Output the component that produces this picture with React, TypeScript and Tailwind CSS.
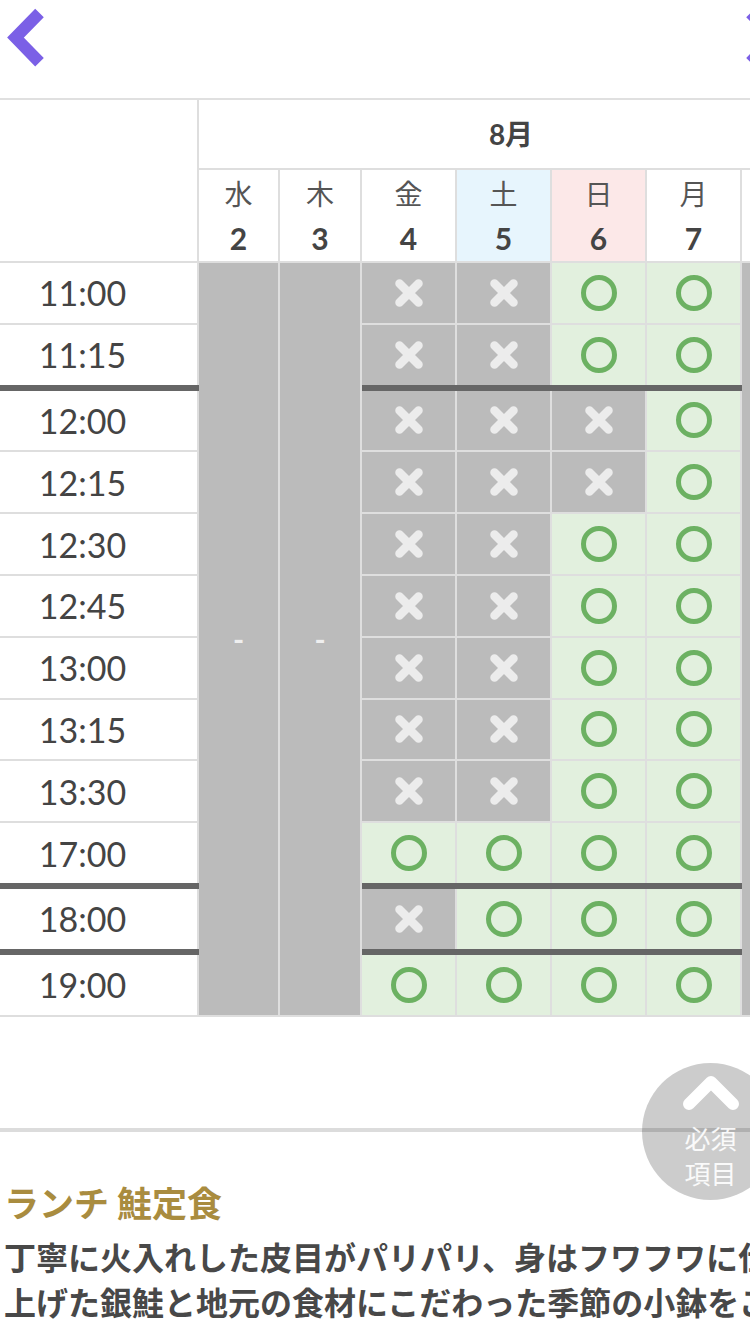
import React from 'react'

type Mark = 'x' | 'o'

interface Slot {
  time: string
  thick?: boolean
  marks: Mark[]
}

interface Day {
  name: string
  date: number
  headBg: string
  offscreen?: boolean
}

const days: Day[] = [
  { name: '水', date: 2, headBg: 'bg-white' },
  { name: '木', date: 3, headBg: 'bg-white' },
  { name: '金', date: 4, headBg: 'bg-white' },
  { name: '土', date: 5, headBg: 'bg-[#e7f5fd]' },
  { name: '日', date: 6, headBg: 'bg-[#fce8e8]' },
  { name: '月', date: 7, headBg: 'bg-white' },
  { name: '火', date: 8, headBg: 'bg-white', offscreen: true }
]

const slots: Slot[] = [
  { time: '11:00', marks: ['x', 'x', 'o', 'o'] },
  { time: '11:15', thick: true, marks: ['x', 'x', 'o', 'o'] },
  { time: '12:00', marks: ['x', 'x', 'x', 'o'] },
  { time: '12:15', marks: ['x', 'x', 'x', 'o'] },
  { time: '12:30', marks: ['x', 'x', 'o', 'o'] },
  { time: '12:45', marks: ['x', 'x', 'o', 'o'] },
  { time: '13:00', marks: ['x', 'x', 'o', 'o'] },
  { time: '13:15', marks: ['x', 'x', 'o', 'o'] },
  { time: '13:30', marks: ['x', 'x', 'o', 'o'] },
  { time: '17:00', thick: true, marks: ['o', 'o', 'o', 'o'] },
  { time: '18:00', thick: true, marks: ['x', 'o', 'o', 'o'] },
  { time: '19:00', marks: ['o', 'o', 'o', 'o'] }
]

function Chevron({ flip }: { flip?: boolean }) {
  return (
    <svg width="48" height="75" viewBox="0 0 48 75" className={flip ? '-scale-x-100' : ''}>
      <polyline
        points="39.5,13 15.5,37.6 39.5,62.2"
        fill="none"
        stroke="#7b60e6"
        strokeWidth="12"
        strokeLinejoin="miter"
      />
    </svg>
  )
}

function CircleMark() {
  return (
    <svg width="38" height="38" viewBox="0 0 38 38">
      <circle cx="19" cy="19" r="15.5" fill="none" stroke="#6cb162" strokeWidth="5" />
    </svg>
  )
}

function CrossMark() {
  return (
    <svg width="30" height="30" viewBox="0 0 30 30">
      <path d="M5.5 5.5 L24.5 24.5 M24.5 5.5 L5.5 24.5" stroke="#ececec" strokeWidth="8.5" strokeLinecap="round" />
    </svg>
  )
}

function ClosedColumn({ label = true }: { label?: boolean }) {
  return (
    <div className="row-span-12 flex items-center justify-center border-r-2 border-b-2 border-[#dedede] bg-[#bbbbbb]">
      {label && <span className="text-[30px] leading-none font-bold text-[#efefef]">-</span>}
    </div>
  )
}

export default function App() {
  return (
    <div className="relative h-[1334px] w-[750px] overflow-hidden bg-white font-['Lato','Noto_Sans_CJK_JP',sans-serif] text-[#444]">
      <div className="w-[790px]">
        {/* nav */}
        <div className="flex h-[100px] items-start justify-between border-b-2 border-[#e0e0e0]">
          <Chevron />
          <Chevron flip />
        </div>

        {/* calendar */}
        <div className="overflow-hidden">
          <div className="-ml-[32px] grid w-[855px] grid-cols-[231px_81px_82px_95px_95px_95px_95px_81px]">
            <div className="row-span-2 border-r-2 border-b-2 border-[#dedede]" />
            <div className="col-span-7 flex h-[70px] items-center justify-center border-b-2 border-[#dedede] text-[28px] font-bold">
              8月
            </div>
            {days.map((d) => (
              <div
                key={d.date}
                className={`flex h-[93px] flex-col items-center justify-center border-r-2 border-b-2 border-[#dedede] ${d.headBg}`}
              >
                {!d.offscreen && (
                  <>
                    <span className="text-[28px] leading-[44px] text-[#555]">{d.name}</span>
                    <span className="text-[30px] leading-[44px] font-bold">{d.date}</span>
                  </>
                )}
              </div>
            ))}

            {slots.map((s, i) => (
              <React.Fragment key={s.time}>
                <div
                  className={`flex items-center justify-center pr-[2px] text-[34px] text-[#444] shadow-[inset_-2px_0_0_#dedede] ${
                    s.thick ? 'h-[65.8px] border-b-[6px] border-[#666]' : 'h-[61.8px] border-b-2 border-[#dedede]'
                  }`}
                >
                  {s.time}
                </div>
                {i === 0 && <ClosedColumn />}
                {i === 0 && <ClosedColumn />}
                {s.marks.map((m, j) => (
                  <div
                    key={j}
                    className={`flex items-center justify-center pr-[2px] shadow-[inset_-2px_0_0_#dedede] ${
                      m === 'x' ? 'bg-[#bbbbbb]' : 'bg-[#e2f0de]'
                    } ${s.thick ? 'border-b-[6px] border-[#666]' : 'border-b-2 border-[#dedede]'}`}
                  >
                    {m === 'x' ? <CrossMark /> : <CircleMark />}
                  </div>
                ))}
                {i === 0 && <ClosedColumn label={false} />}
              </React.Fragment>
            ))}
          </div>
        </div>

        <div className="h-[111px]" />
        <div className="h-[4px] bg-[#dcdcdc]" />

        {/* menu description */}
        <div className="pt-[47px] pl-[4px] font-['Noto_Sans_CJK_JP',sans-serif]">
          <h2 className="text-[35px] leading-[45px] font-bold text-[#a98c3f]">ランチ 鮭定食</h2>
          <p className="mt-[10px] text-[32px] leading-[45px] font-bold whitespace-nowrap text-[#484848]">
            <span className="block">丁寧に火入れした皮目がパリパリ、身はフワフワに仕</span>
            <span className="block">上げた銀鮭と地元の食材にこだわった季節の小鉢をご</span>
          </p>
        </div>
      </div>

      {/* floating required-items button */}
      <button className="absolute top-[1063px] left-[642px] flex h-[137px] w-[137px] flex-col items-center rounded-full bg-black/20 pt-[10px] font-['Noto_Sans_CJK_JP',sans-serif] text-white/90">
        <svg width="56" height="40" viewBox="0 0 56 40">
          <polyline points="6,31 28,9 50,31" fill="none" stroke="#ffffff" strokeWidth="12" strokeLinecap="round" strokeLinejoin="round" />
        </svg>
        <span className="mt-[7px] block text-[26px] leading-[35px]">必須</span>
        <span className="block text-[26px] leading-[35px]">項目</span>
      </button>
    </div>
  )
}
